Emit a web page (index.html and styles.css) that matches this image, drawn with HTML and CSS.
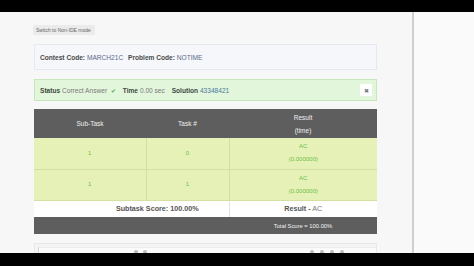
FILE: index.html
```html
<!DOCTYPE html>
<html>
<head>
<meta charset="utf-8">
<link rel="stylesheet" href="styles.css">
</head>
<body>
<div class="topbar"></div>
<div class="screen">
  <div class="main">
    <div class="content">
      <div class="switch">Switch to Non-IDE mode</div>
      <div class="codes">
        <span><b>Contest Code:</b> <span class="val">MARCH21C</span> <b class="gap">Problem Code:</b> <span class="val">NOTIME</span></span>
      </div>
      <div class="status">
        <span class="status-text"><b>Status</b> <span class="grey">Correct Answer</span> <span class="check">✔</span> <b class="gap">Time</b> <span class="grey">0.00 sec</span> <b class="gap">Solution</b> <span class="link">43348421</span></span>
        <span class="close">✖</span>
      </div>
      <table class="results">
        <colgroup><col class="c1"><col class="c2"><col class="c3"></colgroup>
        <thead>
          <tr><th>Sub-Task</th><th>Task #</th><th>Result<br>(time)</th></tr>
        </thead>
        <tbody>
          <tr class="ok"><td>1</td><td>0</td><td>AC<br>(0.000000)</td></tr>
          <tr class="ok"><td>1</td><td>1</td><td>AC<br>(0.000000)</td></tr>
          <tr class="score"><td colspan="2" class="subscore">Subtask Score: 100.00%</td><td><b>Result -</b> <span class="ac">AC</span></td></tr>
          <tr class="total"><td colspan="2"></td><td>Total Score = 100.00%</td></tr>
        </tbody>
      </table>
      <div class="next">
        <div class="next-inner">
          <span class="dots left"><i></i><i></i></span>
          <span class="dots right"><i></i><i></i><i></i><i></i></span>
        </div>
      </div>
    </div>
  </div>
  <div class="divider"></div>
  <div class="side"></div>
</div>
<div class="bottombar"></div>
</body>
</html>
```
FILE: styles.css
```css
* { box-sizing: border-box; }
html, body { margin: 0; padding: 0; }
body {
  width: 474px;
  height: 266px;
  overflow: hidden;
  background: #000;
  font-family: "Liberation Sans", Arial, sans-serif;
  color: #444;
}
.topbar { height: 12px; background: #000; }
.bottombar { height: 13px; background: #000; }
.screen {
  height: 241px;
  display: flex;
  overflow: hidden;
  background: #f7f7f7;
}
.main { width: 412px; overflow: hidden; }
.divider { width: 2px; background: #cfcfcf; }
.side { flex: 1; background: #fafafa; }
.content {
  padding: 13px 0 0 34px;
  width: 377px;
}
.switch {
  width: fit-content;
  height: 10px;
  line-height: 10px;
  margin-left: -1px;
  padding: 0 4px 0 3px;
  font-size: 5px;
  color: #666;
  background: #ebebeb;
  border-radius: 2px;
}
.codes {
  margin-top: 9px;
  height: 26px;
  display: flex;
  align-items: center;
  padding-left: 5px;
  font-size: 6.6px;
  background: #f5f7fa;
  border: 1px solid #e6e9ef;
  white-space: nowrap;
  color: #4a4a4a;
}
.codes .val { color: #5b6b8a; }
.codes .gap { margin-left: 3px; }
.status {
  margin-top: 9px;
  height: 22px;
  display: flex;
  align-items: center;
  justify-content: space-between;
  padding: 0 4px 0 5px;
  background: #e2f6dc;
  border: 1px solid #c8e6be;
  font-size: 6.6px;
  white-space: nowrap;
}
.status .gap { margin-left: 5px; }
.status b { color: #3e4a3e; }
.grey { color: #7a7a7a; }
.check { color: #5aa845; font-size: 5.5px; margin-left: 2px; }
.link { color: #4a7a9a; }
.close {
  width: 12px;
  height: 12px;
  background: #fff;
  color: #777;
  font-size: 6px;
  display: flex;
  align-items: center;
  justify-content: center;
}
.results {
  margin-top: 8px;
  width: 343px;
  border-collapse: collapse;
  table-layout: fixed;
  font-size: 6.5px;
}
.c1 { width: 112px; }
.c2 { width: 83px; }
.c3 { width: 148px; }
.results th {
  height: 29px;
  background: #5e5e5e;
  color: #f0f0f0;
  font-weight: normal;
  line-height: 13px;
  padding: 0;
}
.ok td {
  height: 31px;
  background: #e5f1b6;
  color: #6cbf45;
  text-align: center;
  border: 1px solid #d3e0a2;
  border-top: none;
  line-height: 13px;
  padding: 0;
  font-size: 6px;
}
.ok td:first-child { border-left: none; }
.ok td:last-child { border-right: none; }
.score td {
  height: 17px;
  background: #fff;
  text-align: center;
  font-size: 7.2px;
  color: #555;
  padding: 0;
}
.score td + td { border-left: 1px solid #e2e2e2; }
.score .subscore { font-weight: bold; padding-left: 52px; }
.score b { color: #555; }
.ac { color: #777; }
.total td {
  height: 17px;
  background: #5e5e5e;
  color: #f2f2f2;
  text-align: center;
  font-size: 5.8px;
  padding: 0;
}
.next {
  margin-top: 9px;
  width: 343px;
  height: 20px;
  background: #f2f4f6;
  border: 1px solid #e8e8e8;
  padding: 3px 0 0 3px;
}
.next-inner {
  height: 14px;
  background: #fafafa;
  border-left: 1px solid #d8d8d8;
  border-top: 1px solid #ececec;
  position: relative;
}
.dots { position: absolute; top: 2px; display: flex; gap: 5px; }
.dots.left { left: 95px; }
.dots.right { left: 271px; gap: 6px; }
.dots i { display: block; width: 4px; height: 4px; border-radius: 50%; background: #bbb; }
```
